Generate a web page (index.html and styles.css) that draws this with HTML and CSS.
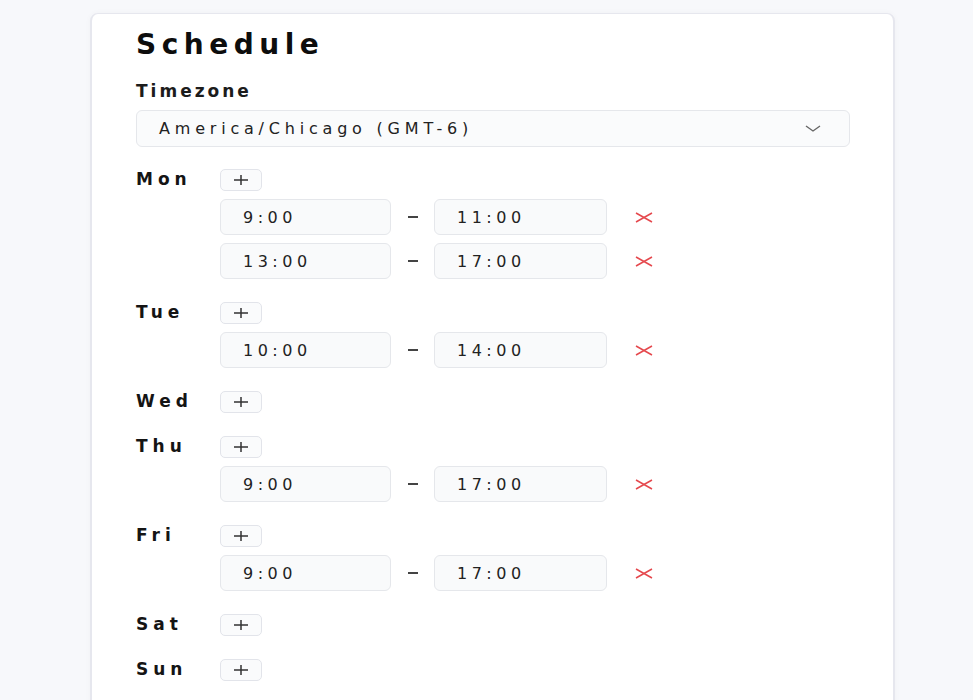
FILE: index.html
```html
<!DOCTYPE html>
<html lang="en">
<head>
<meta charset="UTF-8">
<meta name="viewport" content="width=device-width, initial-scale=1.0">
<title>Schedule</title>
<link rel="stylesheet" href="styles.css">
</head>
<body>
<div class="page">
    <div class="card">
        <h1>Schedule</h1>
        <label class="field-label" for="timezone">Timezone</label>
        <button class="select" id="timezone" type="button">
            <span class="select-text">America/Chicago (GMT-6)</span>
            <svg class="chevron" width="16" height="7" viewBox="0 0 16 7"><polyline points="1,1 8,6 15,1" fill="none" stroke="#666" stroke-width="1.4"/></svg>
        </button>

        <div class="days">
            <div class="day">
                <div class="day-name">Mon</div>
                <div class="slots">
                    <button class="add" type="button"><svg width="14" height="10" viewBox="0 0 14 10"><path d="M0 5H14M7 0V10" stroke="#333" stroke-width="1.5"/></svg></button>
                    <div class="slot">
                        <input class="time" type="text" value="9:00">
                        <span class="dash"></span>
                        <input class="time time-end" type="text" value="11:00">
                        <button class="remove" type="button"><svg width="18" height="11" viewBox="0 0 18 11"><path d="M1 1L17 10M17 1L1 10" stroke="#e5484d" stroke-width="1.5"/></svg></button>
                    </div>
                    <div class="slot">
                        <input class="time" type="text" value="13:00">
                        <span class="dash"></span>
                        <input class="time time-end" type="text" value="17:00">
                        <button class="remove" type="button"><svg width="18" height="11" viewBox="0 0 18 11"><path d="M1 1L17 10M17 1L1 10" stroke="#e5484d" stroke-width="1.5"/></svg></button>
                    </div>
                </div>
            </div>

            <div class="day">
                <div class="day-name">Tue</div>
                <div class="slots">
                    <button class="add" type="button"><svg width="14" height="10" viewBox="0 0 14 10"><path d="M0 5H14M7 0V10" stroke="#333" stroke-width="1.5"/></svg></button>
                    <div class="slot">
                        <input class="time" type="text" value="10:00">
                        <span class="dash"></span>
                        <input class="time time-end" type="text" value="14:00">
                        <button class="remove" type="button"><svg width="18" height="11" viewBox="0 0 18 11"><path d="M1 1L17 10M17 1L1 10" stroke="#e5484d" stroke-width="1.5"/></svg></button>
                    </div>
                </div>
            </div>

            <div class="day">
                <div class="day-name">Wed</div>
                <div class="slots">
                    <button class="add" type="button"><svg width="14" height="10" viewBox="0 0 14 10"><path d="M0 5H14M7 0V10" stroke="#333" stroke-width="1.5"/></svg></button>
                </div>
            </div>

            <div class="day">
                <div class="day-name">Thu</div>
                <div class="slots">
                    <button class="add" type="button"><svg width="14" height="10" viewBox="0 0 14 10"><path d="M0 5H14M7 0V10" stroke="#333" stroke-width="1.5"/></svg></button>
                    <div class="slot">
                        <input class="time" type="text" value="9:00">
                        <span class="dash"></span>
                        <input class="time time-end" type="text" value="17:00">
                        <button class="remove" type="button"><svg width="18" height="11" viewBox="0 0 18 11"><path d="M1 1L17 10M17 1L1 10" stroke="#e5484d" stroke-width="1.5"/></svg></button>
                    </div>
                </div>
            </div>

            <div class="day">
                <div class="day-name">Fri</div>
                <div class="slots">
                    <button class="add" type="button"><svg width="14" height="10" viewBox="0 0 14 10"><path d="M0 5H14M7 0V10" stroke="#333" stroke-width="1.5"/></svg></button>
                    <div class="slot">
                        <input class="time" type="text" value="9:00">
                        <span class="dash"></span>
                        <input class="time time-end" type="text" value="17:00">
                        <button class="remove" type="button"><svg width="18" height="11" viewBox="0 0 18 11"><path d="M1 1L17 10M17 1L1 10" stroke="#e5484d" stroke-width="1.5"/></svg></button>
                    </div>
                </div>
            </div>

            <div class="day">
                <div class="day-name">Sat</div>
                <div class="slots">
                    <button class="add" type="button"><svg width="14" height="10" viewBox="0 0 14 10"><path d="M0 5H14M7 0V10" stroke="#333" stroke-width="1.5"/></svg></button>
                </div>
            </div>

            <div class="day">
                <div class="day-name">Sun</div>
                <div class="slots">
                    <button class="add" type="button"><svg width="14" height="10" viewBox="0 0 14 10"><path d="M0 5H14M7 0V10" stroke="#333" stroke-width="1.5"/></svg></button>
                </div>
            </div>
        </div>
    </div>
</div>
</body>
</html>
```

FILE: styles.css
```css
html, body {
    margin: 0;
    padding: 0;
    overflow: hidden;
}
body {
    font-family: "DejaVu Sans", "Liberation Sans", sans-serif;
    background-color: #f7f8fb;
    color: #1a1a1a;
}
.page {
    padding: 13px 0 0 90px;
}
.card {
    width: 805px;
    box-sizing: border-box;
    background-color: #fff;
    border: 1px solid #e6e7ee;
    border-left-width: 2px;
    border-right-width: 2px;
    border-radius: 8px;
    padding: 16px 44px 40px 44px;
    box-shadow: 0 0 6px rgba(0, 0, 0, 0.03);
}
h1 {
    margin: 0 0 21px 0;
    font-size: 28px;
    line-height: 30px;
    letter-spacing: 5.5px;
    font-weight: bold;
    color: #0d0d0d;
}
.field-label {
    display: block;
    font-size: 17px;
    line-height: 20px;
    font-weight: bold;
    letter-spacing: 3px;
    margin-bottom: 9px;
    color: #1c1c1c;
}
.select {
    display: flex;
    align-items: center;
    justify-content: space-between;
    width: 714px;
    height: 37px;
    box-sizing: border-box;
    padding: 0 28px 0 22px;
    border: 1px solid #e5e7eb;
    border-radius: 6px;
    background-color: #fafbfc;
    font-family: inherit;
    cursor: pointer;
}
.select-text {
    font-size: 16px;
    line-height: 20px;
    letter-spacing: 4.8px;
    color: #222;
}
.days {
    display: flex;
    flex-direction: column;
    gap: 23px;
    margin-top: 22px;
}
.day {
    display: flex;
    align-items: flex-start;
}
.day-name {
    width: 84px;
    flex-shrink: 0;
    font-size: 17px;
    line-height: 21px;
    font-weight: bold;
    letter-spacing: 5px;
    color: #141414;
}
.slots {
    display: flex;
    flex-direction: column;
    align-items: flex-start;
    gap: 8px;
}
.add {
    width: 42px;
    height: 22px;
    box-sizing: border-box;
    display: flex;
    align-items: center;
    justify-content: center;
    padding: 0;
    border: 1px solid #e2e4ea;
    border-radius: 5px;
    background-color: #fafbfc;
    cursor: pointer;
}
.slot {
    display: flex;
    align-items: center;
}
.time {
    width: 171px;
    height: 36px;
    box-sizing: border-box;
    padding: 0 0 0 22px;
    border: 1px solid #e5e7eb;
    border-radius: 6px;
    background-color: #f9fafb;
    font-family: "DejaVu Sans", "Liberation Sans", sans-serif;
    font-size: 16px;
    letter-spacing: 4.5px;
    color: #222;
}
.time-end {
    width: 173px;
}
.dash {
    width: 43px;
    display: flex;
    justify-content: center;
}
.dash::before {
    content: "";
    width: 10px;
    height: 2px;
    background-color: #444;
}
.remove {
    margin-left: 22px;
    width: 30px;
    height: 24px;
    display: flex;
    align-items: center;
    justify-content: center;
    padding: 0;
    border: none;
    background: none;
    cursor: pointer;
}
```
